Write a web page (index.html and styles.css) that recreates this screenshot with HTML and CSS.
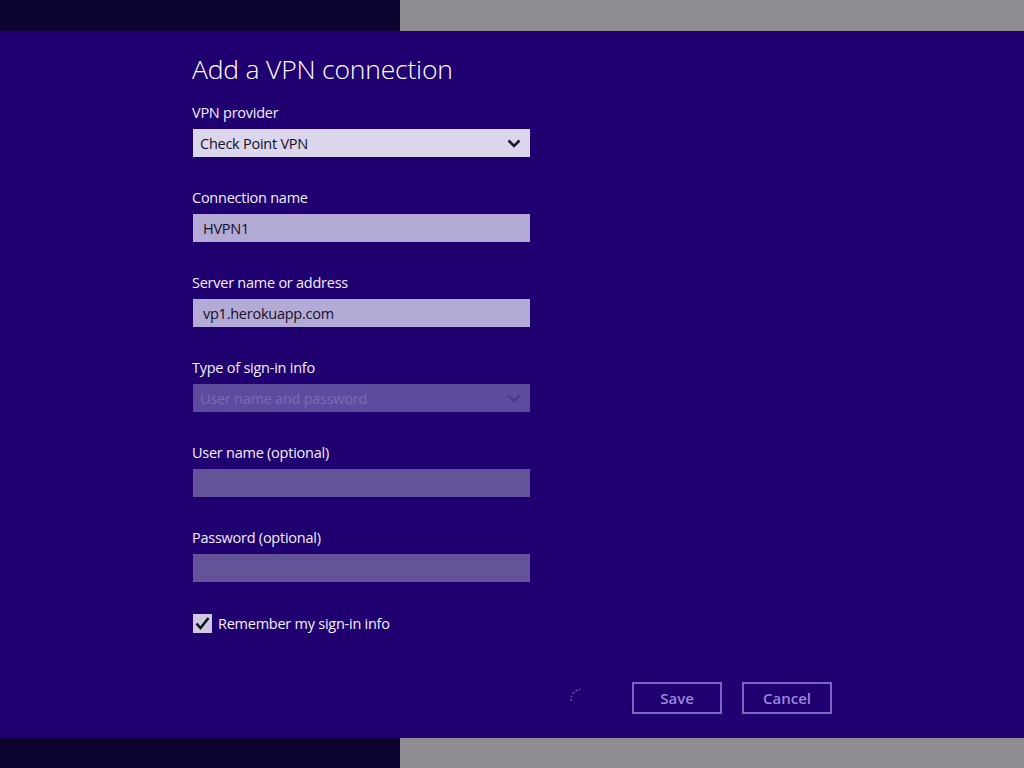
FILE: index.html
```html
<!DOCTYPE html>
<html>
<head>
<meta charset="utf-8">
<link rel="stylesheet" href="styles.css">
</head>
<body>
<div class="band"><div class="band-dark"></div><div class="band-gray"></div></div>
<main class="main">
  <h1 class="title">Add a VPN connection</h1>
  <div class="form">
    <div class="field">
      <div class="label">VPN provider</div>
      <div class="select">
        <span>Check Point VPN</span>
        <svg class="chev" width="14" height="9" viewBox="0 0 14 9"><path d="M1.5 1.5 L7 7 L12.5 1.5" fill="none" stroke="#1a1530" stroke-width="2.6"/></svg>
      </div>
    </div>
    <div class="field">
      <div class="label">Connection name</div>
      <div class="input filled">HVPN1</div>
    </div>
    <div class="field">
      <div class="label">Server name or address</div>
      <div class="input filled">vp1.herokuapp.com</div>
    </div>
    <div class="field">
      <div class="label">Type of sign-in info</div>
      <div class="select disabled">
        <span>User name and password</span>
        <svg class="chev" width="14" height="9" viewBox="0 0 14 9"><path d="M1.5 1.5 L7 7 L12.5 1.5" fill="none" stroke="#4a3a88" stroke-width="2.6"/></svg>
      </div>
    </div>
    <div class="field">
      <div class="label">User name (optional)</div>
      <div class="input empty"></div>
    </div>
    <div class="field">
      <div class="label">Password (optional)</div>
      <div class="input empty"></div>
    </div>
    <div class="check-row">
      <div class="checkbox">
        <svg width="19" height="19" viewBox="0 0 19 19"><path d="M3.5 9.5 L7.5 14 L15.5 4" fill="none" stroke="#111" stroke-width="2.6"/></svg>
      </div>
      <span class="check-label">Remember my sign-in info</span>
    </div>
  </div>
  <div class="actions">
    <svg class="spinner" width="14" height="16" viewBox="0 0 14 16">
      <circle cx="2" cy="13" r="1" fill="#5a44a8"/>
      <circle cx="2.5" cy="9.5" r="1" fill="#5e48ac"/>
      <circle cx="4.5" cy="6" r="1" fill="#6650b4"/>
      <circle cx="7.5" cy="3.5" r="1" fill="#6e58bc"/>
      <circle cx="10.5" cy="2.5" r="1" fill="#5a44a8"/>
    </svg>
    <button class="btn">Save</button>
    <button class="btn">Cancel</button>
  </div>
</main>
<div class="band"><div class="band-dark"></div><div class="band-gray"></div></div>
</body>
</html>
```

FILE: styles.css
```css
html, body {
  margin: 0;
  padding: 0;
}
body {
  width: 1024px;
  height: 768px;
  overflow: hidden;
  background: #200070;
  font-family: "Open Sans", "Noto Sans", sans-serif;
  color: #f2eeff;
}
.band {
  display: flex;
  height: 31px;
}
.band:last-child {
  height: 30px;
}
.band-dark {
  width: 400px;
  background: #0c0330;
}
.band-gray {
  flex: 1;
  background: #8e8c91;
}
.main {
  height: 707px;
  box-sizing: border-box;
  padding: 21px 0 0 192px;
}
.title {
  margin: 0;
  font-size: 26.5px;
  line-height: 34px;
  font-weight: 300;
  color: #ffffff;
  letter-spacing: -0.2px;
}
.form {
  margin-top: 15px;
  display: flex;
  flex-direction: column;
  gap: 29px;
  width: 338px;
}
.field {
  display: flex;
  flex-direction: column;
}
.label {
  font-size: 14.5px;
  line-height: 24px;
  height: 24px;
  margin-bottom: 4px;
  letter-spacing: -0.25px;
}
.select, .input {
  height: 28px;
  box-sizing: border-box;
  margin-left: 1px;
  width: 337px;
  display: flex;
  align-items: center;
  font-size: 14.5px;
  letter-spacing: -0.25px;
  color: #15102a;
}
.select {
  background: #dbd6eb;
  padding: 0 9px 0 7px;
  justify-content: space-between;
}
.select.disabled {
  background: #5d4c9e;
  color: #7a6bb3;
}
.input {
  padding: 0 10px;
}
.input.filled {
  background: #b4aad6;
}
.input.empty {
  background: #655399;
}
.chev {
  display: block;
}
.check-row {
  margin-top: 2px;
  display: flex;
  align-items: center;
  height: 20px;
}
.checkbox {
  width: 19px;
  height: 19px;
  margin-left: 1px;
  background: #cfc8e4;
  display: flex;
}
.check-label {
  margin-left: 6px;
  font-size: 14.5px;
  letter-spacing: -0.25px;
}
.actions {
  margin-top: 49px;
  width: 640px;
  display: flex;
  justify-content: flex-end;
  align-items: center;
  gap: 20px;
}
.spinner {
  margin-right: 29px;
  margin-top: -6px;
}
.btn {
  width: 90px;
  height: 32px;
  box-sizing: border-box;
  border: 2px solid #7d65c8;
  background: transparent;
  color: #9a88d4;
  font-family: "Open Sans", "Noto Sans", sans-serif;
  font-size: 15px;
  font-weight: 600;
  padding: 0;
}
```
